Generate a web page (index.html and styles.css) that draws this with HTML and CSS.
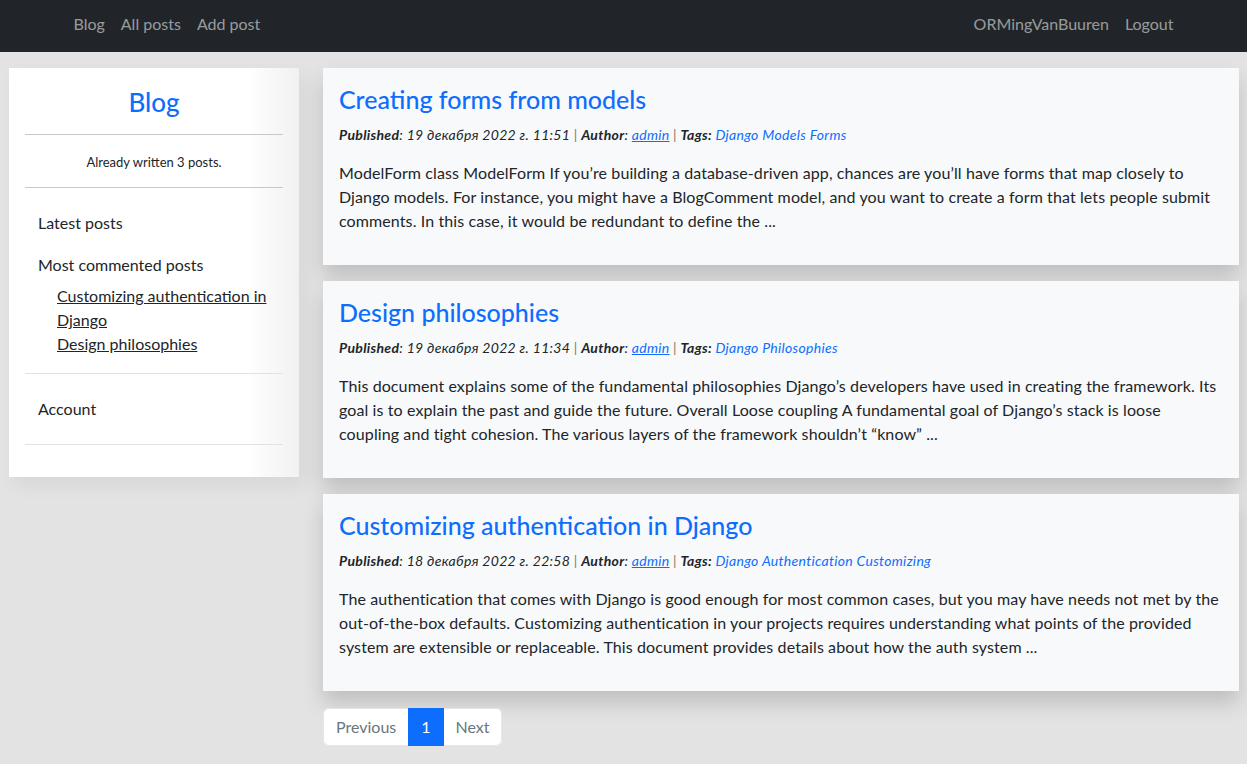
FILE: index.html
```html
<!DOCTYPE html>
<html lang="en">
<head>
<meta charset="utf-8">
<title>Blog</title>
<link rel="stylesheet" href="styles.css">
</head>
<body>
<nav class="navbar">
  <div class="nav-container">
    <ul class="nav-list">
      <li><a class="nav-link" href="#">Blog</a></li>
      <li><a class="nav-link" href="#">All posts</a></li>
      <li><a class="nav-link" href="#">Add post</a></li>
    </ul>
    <ul class="nav-list">
      <li><a class="nav-link" href="#">ORMingVanBuuren</a></li>
      <li><a class="nav-link" href="#">Logout</a></li>
    </ul>
  </div>
</nav>

<div class="layout">
  <aside class="sidebar">
    <h2 class="sidebar-title">Blog</h2>
    <hr class="rule rule-dark">
    <p class="sidebar-count">Already written 3 posts.</p>
    <hr class="rule rule-dark">
    <div class="side-section">
      <div class="side-item">Latest posts</div>
      <div class="side-item side-item-gap">Most commented posts</div>
      <ul class="side-sublist">
        <li><a href="#">Customizing authentication in Django</a></li>
        <li><a href="#">Design philosophies</a></li>
      </ul>
    </div>
    <hr class="rule rule-light">
    <div class="side-section side-account">
      <div class="side-item">Account</div>
    </div>
    <hr class="rule rule-light">
  </aside>

  <main class="content">
    <article class="post">
      <h2 class="post-title"><a href="#">Creating forms from models</a></h2>
      <p class="post-meta"><b>Published</b>: 19 декабря 2022 г. 11:51 <span class="sep">|</span> <b>Author</b>: <a class="author" href="#">admin</a> <span class="sep">|</span> <b>Tags:</b> <a class="tag" href="#">Django</a> <a class="tag" href="#">Models</a> <a class="tag" href="#">Forms</a></p>
      <p class="post-body">ModelForm class ModelForm If you’re building a database-driven app, chances are you’ll have forms that map closely to Django models. For instance, you might have a BlogComment model, and you want to create a form that lets people submit comments. In this case, it would be redundant to define the ...</p>
    </article>
    <article class="post">
      <h2 class="post-title"><a href="#">Design philosophies</a></h2>
      <p class="post-meta"><b>Published</b>: 19 декабря 2022 г. 11:34 <span class="sep">|</span> <b>Author</b>: <a class="author" href="#">admin</a> <span class="sep">|</span> <b>Tags:</b> <a class="tag" href="#">Django</a> <a class="tag" href="#">Philosophies</a></p>
      <p class="post-body">This document explains some of the fundamental philosophies Django’s developers have used in creating the framework. Its goal is to explain the past and guide the future. Overall Loose coupling A fundamental goal of Django’s stack is loose coupling and tight cohesion. The various layers of the framework shouldn’t “know” ...</p>
    </article>
    <article class="post">
      <h2 class="post-title"><a href="#">Customizing authentication in Django</a></h2>
      <p class="post-meta"><b>Published</b>: 18 декабря 2022 г. 22:58 <span class="sep">|</span> <b>Author</b>: <a class="author" href="#">admin</a> <span class="sep">|</span> <b>Tags:</b> <a class="tag" href="#">Django</a> <a class="tag" href="#">Authentication</a> <a class="tag" href="#">Customizing</a></p>
      <p class="post-body">The authentication that comes with Django is good enough for most common cases, but you may have needs not met by the out-of-the-box defaults. Customizing authentication in your projects requires understanding what points of the provided system are extensible or replaceable. This document provides details about how the auth system ...</p>
    </article>
    <nav class="pagination">
      <span class="page page-disabled page-first">Previous</span>
      <span class="page page-active">1</span>
      <span class="page page-disabled page-last">Next</span>
    </nav>
  </main>
</div>
</body>
</html>
```

FILE: styles.css
```css
* { box-sizing: border-box; }

html, body {
  margin: 0;
  padding: 0;
}

body {
  font-family: Lato, "Noto Sans", "Liberation Sans", sans-serif;
  font-size: 16px;
  line-height: 24px;
  color: #212529;
  background: #e3e3e3;
  min-height: 764px;
}

a { color: #0d6efd; }

/* Navbar */
.navbar {
  background: #212529;
  height: 52px;
}
.nav-container {
  width: 1140px;
  margin: 0 auto;
  padding: 0 12px 4px;
  height: 52px;
  display: flex;
  justify-content: space-between;
  align-items: center;
}
.nav-list {
  list-style: none;
  margin: 0;
  padding: 0;
  display: flex;
}
.nav-link {
  display: block;
  padding: 8px;
  color: rgba(255, 255, 255, 0.55);
  text-decoration: none;
}

/* Layout */
.layout {
  display: flex;
  align-items: flex-start;
  gap: 24px;
  padding: 16px 8px 0 9px;
}

.sidebar {
  width: 290px;
  flex: none;
  padding: 16px 16px 32px;
  background: linear-gradient(to right, #ffffff 0%, #ffffff 82%, #f1f1f1 100%);
  box-shadow: 6px 8px 18px rgba(0, 0, 0, 0.06);
}
.sidebar-title {
  margin: 3px 0 17px;
  text-align: center;
  font-size: 26px;
  line-height: 30px;
  font-weight: 500;
  color: #0d6efd;
}
.rule {
  border: 0;
  margin: 0;
  height: 1px;
}
.rule-dark { background: #c8c8c8; }
.rule-light { background: #e2e2e2; }

.sidebar-count {
  margin: 17px 0 15px;
  font-size: 13px;
  line-height: 20px;
  text-align: center;
}

.side-section {
  padding: 23px 0 17px 13px;
}
.side-account {
  padding-bottom: 23px;
}
.side-item {
  line-height: 24px;
}
.side-item-gap {
  margin-top: 18px;
}
.side-sublist {
  list-style: none;
  margin: 7px 0 0;
  padding: 0 0 0 19px;
}
.side-sublist a {
  color: #212529;
  text-decoration: underline;
}

/* Posts */
.content {
  flex: 1;
  min-width: 0;
}
.post {
  background: #f8f9fa;
  padding: 15px 16px 16px;
  margin-bottom: 16px;
  box-shadow: 0 12px 20px rgba(0, 0, 0, 0.16);
}
.post-title {
  margin: 0 0 9px;
  font-size: 25px;
  line-height: 32px;
  font-weight: 500;
}
.post-title a {
  text-decoration: none;
  color: #0d6efd;
}
.post-meta {
  margin: 0 0 16px;
  font-size: 14px;
  line-height: 21px;
  letter-spacing: 0.3px;
  font-style: italic;
}
.post-meta b { font-weight: 700; }
.post-meta .sep { color: #8a7a60; font-style: normal; }
.post-meta .author { color: #0d6efd; text-decoration: underline; }
.post-meta .tag { color: #0d6efd; text-decoration: none; }
.post-body {
  margin: 0 0 16px;
  letter-spacing: 0.105px;
}

/* Pagination */
.pagination {
  display: inline-flex;
  margin-top: 1px;
  border-radius: 6px;
  background: #fff;
}
.page {
  display: block;
  padding: 6px 12px;
  line-height: 24px;
  border: 1px solid #e6e6e6;
}
.page-disabled {
  color: #6c757d;
  background: #fff;
}
.page-first {
  border-radius: 6px 0 0 6px;
  border-right: 0;
}
.page-last {
  border-radius: 0 6px 6px 0;
  border-left: 0;
  padding-right: 11px;
}
.page-active {
  background: #0d6efd;
  border-color: #0d6efd;
  color: #fff;
}
```
